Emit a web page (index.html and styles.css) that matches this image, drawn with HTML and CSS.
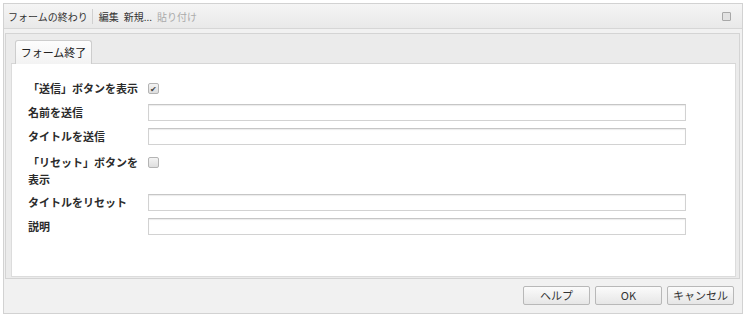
FILE: index.html
```html
<!DOCTYPE html>
<html lang="ja">
<head>
  <meta charset="UTF-8">
  <title>フォームの終わり</title>
  <link rel="stylesheet" href="styles.css">
</head>
<body>
  <div class="dialog">
    <div class="toolbar">
      <span class="title">フォームの終わり</span>
      <span class="sep"></span>
      <span class="tool">編集</span>
      <span class="tool">新規...</span>
      <span class="tool disabled">貼り付け</span>
      <span class="max-btn"></span>
    </div>

    <div class="content">
      <div class="tabpanel">
        <div class="tabstrip">
          <div class="tab">フォーム終了</div>
        </div>
        <div class="panel">
          <div class="form">
            <label>「送信」ボタンを表示</label>
            <div><span class="check checked">&#10004;</span></div>

            <label>名前を送信</label>
            <div><span class="field"></span></div>

            <label>タイトルを送信</label>
            <div><span class="field"></span></div>

            <label class="wrap">「リセット」ボタンを表示</label>
            <div class="wrap-cell"><span class="check"></span></div>

            <label>タイトルをリセット</label>
            <div><span class="field"></span></div>

            <label>説明</label>
            <div><span class="field"></span></div>
          </div>
        </div>
      </div>
    </div>

    <div class="footer">
      <button>ヘルプ</button>
      <button>OK</button>
      <button>キャンセル</button>
    </div>
  </div>
</body>
</html>
```

FILE: styles.css
```css
* { box-sizing: border-box; margin: 0; padding: 0; }
body {
  background: #fff;
  font-family: "Noto Sans CJK JP", "Noto Sans", sans-serif;
  font-size: 11px;
  color: #333;
}
/* Dialog frame */
.dialog {
  width: 740px; height: 311px;
  margin: 3px 0 0 3px;
  border: 1px solid #d2d2d2;
  background: #f1f1f1;
  display: flex; flex-direction: column;
}
/* Toolbar */
.toolbar {
  height: 25px;
  display: flex; align-items: center;
  padding: 0 5px 0 4px;
  font-size: 10px;
  background: linear-gradient(#f5f5f5, #e9e9e9);
  border-bottom: 1px solid #d6d6d6;
}
.title { color: #333; }
.sep { width: 1px; height: 15px; background: #d0d0d0; margin: 0 6px 0 4px; }
.tool { color: #333; margin-right: 5px; }
.tool.disabled { color: #aaa; }
.max-btn {
  margin-left: auto; margin-right: 6px;
  width: 9px; height: 9px;
  border: 1px solid #a8a8a8;
  background: #e2e2e2;
  border-radius: 1px;
}
/* Tab panel */
.content { flex: 1; padding: 4px 2px 0 1px; }
.tabpanel {
  height: 246px;
  border: 1px solid #d4d4d4;
  background: #ebebeb;
  padding: 0 3px 0 5px;
  display: flex; flex-direction: column;
}
.tabstrip {
  height: 30px;
  display: flex; align-items: flex-end;
  padding-left: 4px;
  border-bottom: 1px solid #d6d6d6;
}
.tab {
  width: 77px; height: 24px;
  margin-bottom: -1px;
  border: 1px solid #cdcdcd; border-bottom: none;
  border-radius: 3px 3px 0 0;
  background: linear-gradient(#fdfdfd, #f3f3f3);
  text-align: center; line-height: 22px;
  color: #222;
}
.panel {
  flex: 1;
  background: #fff;
  border: 1px solid #dcdcdc; border-top: none;
  margin-bottom: 1px;
  padding: 16px 0 0 16px;
}
/* Form rows */
.form {
  display: grid;
  grid-template-columns: 120px 538px;
  row-gap: 7px;
  align-items: start;
}
.form label { font-weight: bold; line-height: 17px; color: #2b2b2b; }
.form label.wrap { width: 112px; margin: 2px 0 -1px; }
.wrap-cell { margin-top: 2px; }
.check {
  display: inline-block; vertical-align: top;
  width: 11px; height: 11px; margin-top: 3px;
  border: 1px solid #b4b4b4;
  border-radius: 2px;
  background: linear-gradient(#f4f4f4, #dedede);
  font-size: 8px; line-height: 9px; text-align: center;
  color: #444;
}
.field {
  display: block;
  height: 17px;
  border: 1px solid #d2d2d2;
  border-top-color: #c6c6c6;
  background: #fff;
  box-shadow: inset 0 1px 1px #ececec;
}
/* Footer buttons */
.footer {
  height: 34px;
  display: flex; justify-content: flex-end; align-items: center;
  gap: 5px;
  padding: 0 8px 2px 0;
}
.footer button {
  width: 67px; height: 19px;
  font-family: inherit; font-size: 11px; color: #333;
  border: 1px solid #b8b8b8;
  border-radius: 2px;
  background: linear-gradient(#fbfbfb, #e6e6e6);
}
```
